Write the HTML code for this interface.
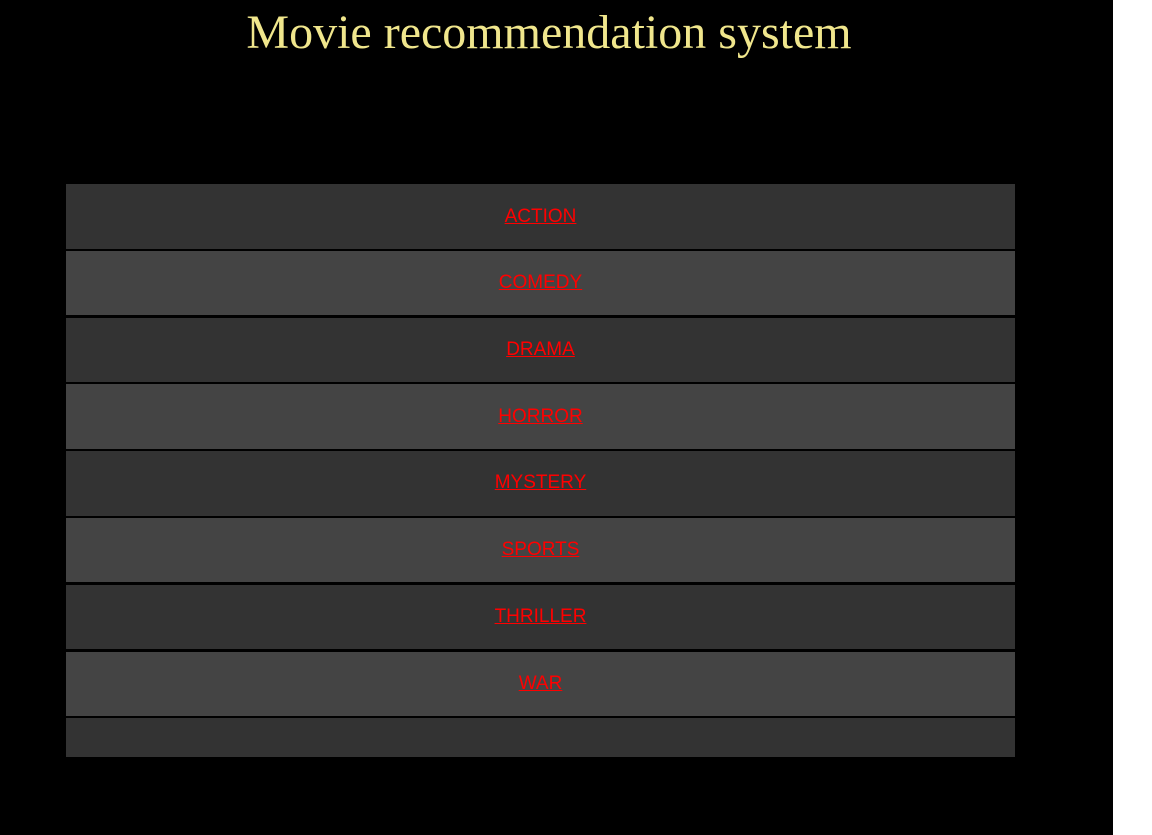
<!DOCTYPE html>
<html><head><style>
html,body{margin:0;padding:0;background:#fff;width:1152px;height:835px;overflow:hidden}
#bg{position:absolute;left:0;top:0;width:1113px;height:835px;background:#000}
h1{position:absolute;left:0;width:1098px;top:5px;margin:0;text-align:center;font:48px "Liberation Serif",serif;color:#f0e68c;font-weight:normal}
.r{position:absolute;left:66px;width:949px;text-align:center;font:19px "Liberation Sans",sans-serif;color:red}
.r a{color:red;text-decoration:underline}
.a{background:#333}.b{background:#444}
</style></head><body>
<div id="bg"></div>
<h1>Movie recommendation system</h1>
<div class="r a" style="top:184px;height:65px;line-height:65px"><a>ACTION</a></div>
<div class="r b" style="top:251px;height:64px;line-height:64px"><a>COMEDY</a></div>
<div class="r a" style="top:318px;height:64px;line-height:64px"><a>DRAMA</a></div>
<div class="r b" style="top:384px;height:65px;line-height:65px"><a>HORROR</a></div>
<div class="r a" style="top:451px;height:65px;line-height:64px"><a>MYSTERY</a></div>
<div class="r b" style="top:518px;height:64px;line-height:64px"><a>SPORTS</a></div>
<div class="r a" style="top:585px;height:64px;line-height:64px"><a>THRILLER</a></div>
<div class="r b" style="top:652px;height:64px;line-height:64px"><a>WAR</a></div>
<div class="r a" style="top:718px;height:39px"></div>
</body></html>
